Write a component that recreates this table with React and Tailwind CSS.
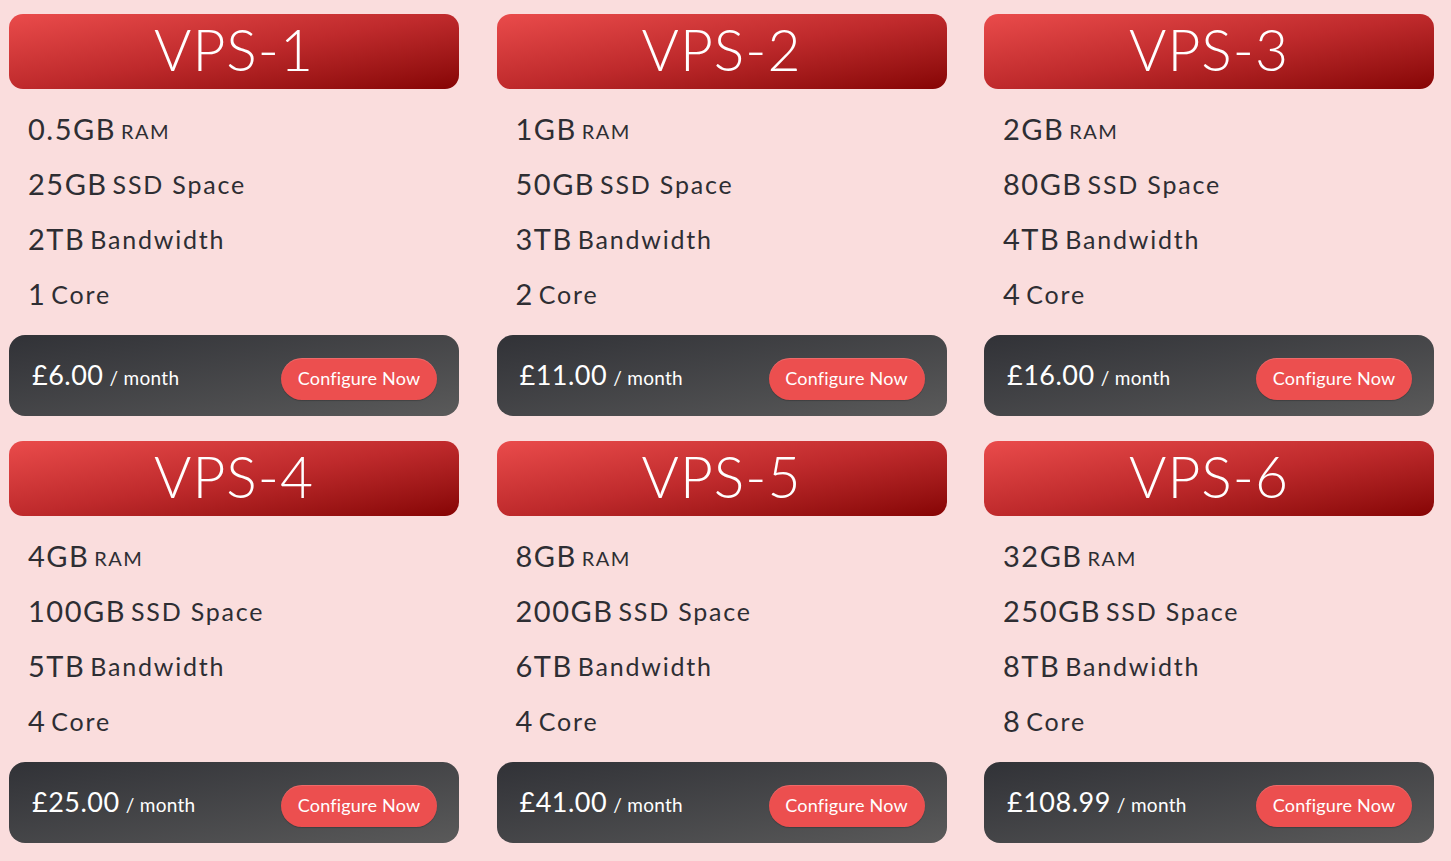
import React from "react";

const plans = [
  { name: "VPS-1", ram: "0.5GB", ssd: "25GB", bw: "2TB", core: "1", price: "£6.00" },
  { name: "VPS-2", ram: "1GB", ssd: "50GB", bw: "3TB", core: "2", price: "£11.00" },
  { name: "VPS-3", ram: "2GB", ssd: "80GB", bw: "4TB", core: "4", price: "£16.00" },
  { name: "VPS-4", ram: "4GB", ssd: "100GB", bw: "5TB", core: "4", price: "£25.00" },
  { name: "VPS-5", ram: "8GB", ssd: "200GB", bw: "6TB", core: "4", price: "£41.00" },
  { name: "VPS-6", ram: "32GB", ssd: "250GB", bw: "8TB", core: "8", price: "£108.99" },
];

function Feature({ value, label, small }) {
  return (
    <div className="h-[55px] flex items-center text-[#2e2e33] whitespace-nowrap">
      <span className="text-[29px] tracking-[1.5px]">{value}</span>
      <span
        className={
          small
            ? "ml-[5px] text-[20px] mt-[4px] tracking-[1.5px]"
            : "ml-[5px] text-[25px] mt-[2px] tracking-[1.8px]"
        }
      >
        {label}
      </span>
    </div>
  );
}

function PlanCard({ plan }) {
  return (
    <div className="flex flex-col w-[450px]">
      {/* Title */}
      <div className="h-[75px] pb-[5px] rounded-[14px] bg-gradient-to-br from-[#ea4b4b] via-[#bf2a2c] to-[#860404] flex items-center justify-center">
        <span className="text-white text-[57px] font-light leading-none tracking-[1px]">{plan.name}</span>
      </div>

      {/* Features */}
      <div className="pt-[12px] pl-[19px] mb-[14px]">
        <Feature value={plan.ram} label="RAM" small />
        <Feature value={plan.ssd} label="SSD Space" />
        <Feature value={plan.bw} label="Bandwidth" />
        <Feature value={plan.core} label="Core" />
      </div>

      {/* Price bar */}
      <div className="h-[81px] rounded-[16px] bg-gradient-to-br from-[#313237] to-[#5a5a5a] flex items-center justify-between pl-[23px] pr-[22px]">
        <div className="flex items-baseline text-white whitespace-nowrap">
          <span className="text-[27px] tracking-[0.5px]">{plan.price}</span>
          <span className="ml-[6px] text-[19px] tracking-[0.3px]">/ month</span>
        </div>
        <button className="mt-[6px] h-[42px] w-[156px] rounded-full bg-[#ec4f4f] text-white text-[18px] tracking-[0.2px] shadow-[inset_0_1px_0_rgba(255,255,255,0.15),0_1px_1px_rgba(0,0,0,0.2)]">
          Configure Now
        </button>
      </div>
    </div>
  );
}

export default function App() {
  return (
    <div
      className="min-h-screen w-full bg-[#fadddd] pl-[9px] pt-[14px]"
      style={{ fontFamily: "Lato, 'Open Sans', sans-serif" }}
    >
      <div className="grid grid-cols-[450px_450px_450px] gap-x-[37.5px] gap-y-[25px]">
        {plans.map((p) => (
          <PlanCard key={p.name} plan={p} />
        ))}
      </div>
    </div>
  );
}
